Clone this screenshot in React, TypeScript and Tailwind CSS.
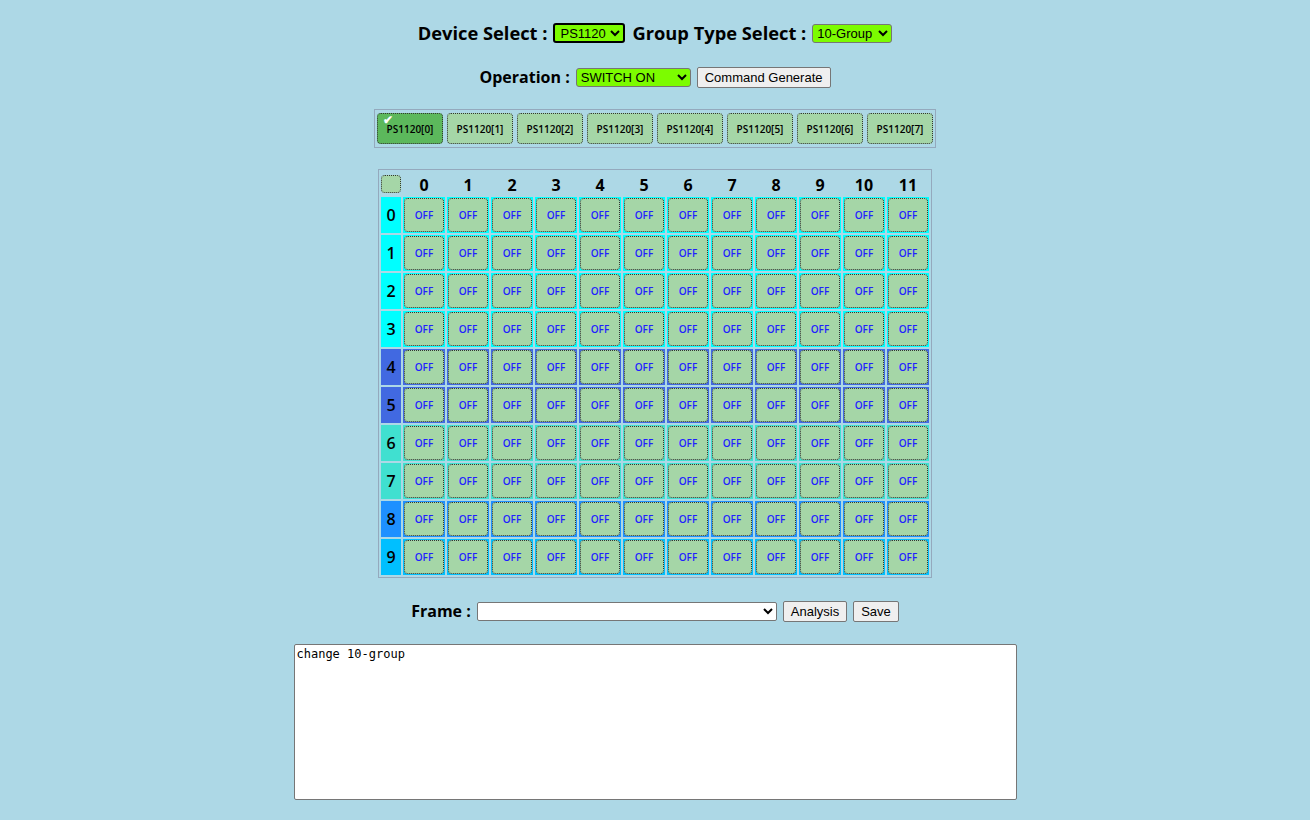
import { useState } from "react";

const rowColors = [
	"bg-[#00ffff]",
	"bg-[#00ffff]",
	"bg-[#00ffff]",
	"bg-[#00ffff]",
	"bg-[#4169e1]",
	"bg-[#4169e1]",
	"bg-[#40e0d0]",
	"bg-[#40e0d0]",
	"bg-[#1e90ff]",
	"bg-[#00bfff]",
];

const cols = Array.from({ length: 12 }, (_, i) => i);
const devices = Array.from({ length: 8 }, (_, i) => `PS1120[${i}]`);

const App = () => {
	const [active, setActive] = useState(0);

	return (
		<div
			className="min-h-[820px] bg-[#add8e6] flex flex-col items-center text-black"
			style={{ fontFamily: '"Open Sans", "Noto Sans", sans-serif' }}>
			<div className="flex items-center gap-[6px] mt-[19px] h-[28px]">
				<span className="text-[18.3px] font-bold">Device Select :</span>
				<select className="w-[72px] h-[20px] bg-[#7cfc00] border-2 border-black rounded-[3px] text-[13px] px-[1px] font-['Liberation_Sans',Arial,sans-serif]">
					<option>PS1120</option>
				</select>
				<span className="text-[18.3px] font-bold ml-[1px]">Group Type Select :</span>
				<select className="w-[80px] h-[19px] bg-[#7cfc00] border border-[#767676] rounded-[3px] text-[13px] font-['Liberation_Sans',Arial,sans-serif]">
					<option>10-Group</option>
				</select>
			</div>

			<div className="flex items-center gap-[6px] mt-[19px] h-[22px]">
				<span className="text-[16px] font-bold">Operation :</span>
				<select className="w-[115px] h-[19px] bg-[#7cfc00] border border-[#767676] rounded-[3px] text-[13px] font-['Liberation_Sans',Arial,sans-serif]">
					<option>SWITCH ON</option>
				</select>
				<button className="h-[21px] px-[7px] bg-[#efefef] border border-[#767676] rounded-[2px] text-[13px] font-['Liberation_Sans',Arial,sans-serif]">
					Command Generate
				</button>
			</div>

			<div className="mt-[21px] border border-[#94a9bd] px-[2px] py-[3px] flex gap-[4px]">
				{devices.map((name, index) => (
					<div
						key={name}
						onClick={() => setActive(index)}
						className={`${
							active === index ? "bg-[#5cb85c]" : "bg-[#a5d6a7]"
						} relative w-[66px] h-[31px] rounded-[4px] border border-dotted border-[#333] flex items-center justify-center text-[10px] font-semibold cursor-pointer`}>
						{active === index && (
							<span className="absolute left-[5px] top-[0px] text-white text-[12px] font-bold leading-none">
								✔
							</span>
						)}
						<span className="mt-[1px]">{name}</span>
					</div>
				))}
			</div>

			<table className="mt-[21px] border border-[#94a9bd] border-separate border-spacing-[2px]">
				<thead>
					<tr className="h-[23px]">
						<td className="w-[20px] p-0 align-middle">
							<div className="w-[20px] h-[18px] rounded-[4px] border border-dotted border-[#333] bg-[#a5d6a7]" />
						</td>
						{cols.map((c) => (
							<td key={c} className="w-[42px] p-0 text-center text-[16px] font-bold align-bottom leading-[20px]">
								{c}
							</td>
						))}
					</tr>
				</thead>
				<tbody>
					{rowColors.map((color, r) => (
						<tr key={r} className="h-[36px]">
							<td className={`${color} w-[20px] p-0 text-center text-[16px] font-semibold`}>{r}</td>
							{cols.map((c) => (
								<td key={c} className={`${color} p-[1px]`}>
									<button className="w-[40px] h-[34px] rounded-[4px] border border-dotted border-[#333] bg-[#a5d6a7] text-[10px] font-semibold text-[#1f1fff] flex items-center justify-center">
										OFF
									</button>
								</td>
							))}
						</tr>
					))}
				</tbody>
			</table>

			<div className="flex items-center gap-[6px] mt-[22px] h-[22px]">
				<span className="text-[16px] font-bold">Frame :</span>
				<select className="w-[300px] h-[19px] bg-white border border-[#767676] rounded-[2px] text-[13px]">
					<option></option>
				</select>
				<button className="h-[21px] px-[7px] bg-[#efefef] border border-[#767676] rounded-[2px] text-[13px] font-['Liberation_Sans',Arial,sans-serif]">
					Analysis
				</button>
				<button className="h-[21px] px-[7px] bg-[#efefef] border border-[#767676] rounded-[2px] text-[13px] font-['Liberation_Sans',Arial,sans-serif]">
					Save
				</button>
			</div>

			<textarea
				className="mt-[22px] w-[723px] h-[156px] bg-white border border-[#767676] rounded-[2px] p-[2px] text-[12px] leading-[15px] resize-none font-['DejaVu_Sans_Mono',monospace]"
				defaultValue="change 10-group"
			/>
		</div>
	);
};

export default App;
